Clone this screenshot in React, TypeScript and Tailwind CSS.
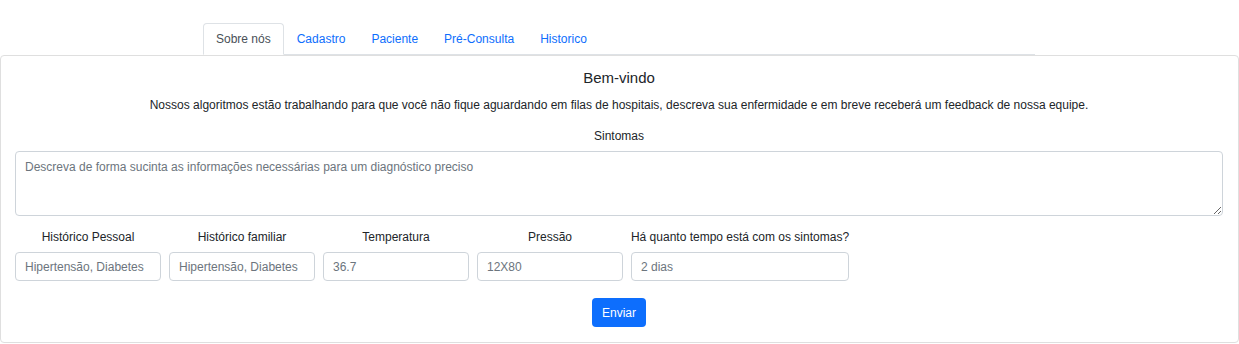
import { useState } from 'react';

const TABS = ['Sobre nós', 'Cadastro', 'Paciente', 'Pré-Consulta', 'Historico'];

const FIELDS = [
  { label: 'Histórico Pessoal', placeholder: 'Hipertensão, Diabetes', w: 'w-[146px]' },
  { label: 'Histórico familiar', placeholder: 'Hipertensão, Diabetes', w: 'w-[146px]' },
  { label: 'Temperatura', placeholder: '36.7', w: 'w-[146px]' },
  { label: 'Pressão', placeholder: '12X80', w: 'w-[146px]' },
  { label: 'Há quanto tempo está com os sintomas?', placeholder: '2 dias', w: 'w-[218px]' },
];

export default function App() {
  const [active, setActive] = useState(0);

  return (
    <div className="min-h-[344px] bg-white font-['Liberation_Sans',Arial,sans-serif] text-[12px] text-[#212529]">
      <nav className="ml-[203px] flex w-[832px] border-b border-[#dee2e6] pt-[23px]">
        {TABS.map((t, i) => (
          <button
            key={t}
            onClick={() => setActive(i)}
            className={
              'mb-[-1px] h-[32px] rounded-t-[4px] border px-[12px] leading-[30px] ' +
              (i === active
                ? 'border-[#dee2e6] border-b-white bg-white text-[#495057]'
                : 'border-transparent text-[#0d6efd]')
            }
          >
            {t}
          </button>
        ))}
      </nav>

      <div className="flex flex-col items-center rounded-[4px] border border-[#dfdfdf] pb-[15px] pl-[14px] pr-[15px]">
        <h5 className="mt-[12px] text-[15px] leading-[20px]">Bem-vindo</h5>
        <p className="mt-[7px] leading-[20px]">
          Nossos algoritmos estão trabalhando para que você não fique aguardando em filas de hospitais,
          descreva sua enfermidade e em breve receberá um feedback de nossa equipe.
        </p>
        <label className="mt-[11px] leading-[20px]">Sintomas</label>
        <textarea
          className="mt-[5px] h-[65px] w-full rounded-[4px] border border-[#ced4da] px-[9px] py-[6px] leading-[18px] placeholder:text-[#6c757d] focus:outline-none"
          placeholder="Descreva de forma sucinta as informações necessárias para um diagnóstico preciso"
        />
        <div className="mt-[11px] flex w-full gap-[8px]">
          {FIELDS.map((f) => (
            <div key={f.label} className={'flex flex-col items-center ' + f.w}>
              <span className="whitespace-nowrap leading-[20px]">{f.label}</span>
              <input
                className="mt-[5px] h-[29px] w-full rounded-[4px] border border-[#ced4da] px-[9px] placeholder:text-[#6c757d] focus:outline-none"
                placeholder={f.placeholder}
              />
            </div>
          ))}
        </div>
        <button className="mt-[17px] h-[29px] rounded-[4px] bg-[#0d6efd] px-[10px] text-white">
          Enviar
        </button>
      </div>
    </div>
  );
}
